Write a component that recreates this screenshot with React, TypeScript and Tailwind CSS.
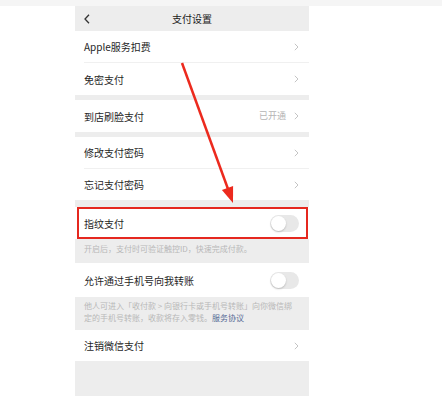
import React from "react";

const font = { fontFamily: '"Noto Sans CJK SC", "Noto Sans", sans-serif' };

const Chevron = () => (
  <svg width="5" height="8" viewBox="0 0 5 8" className="shrink-0">
    <polyline points="0.8,0.8 4,4 0.8,7.2" fill="none" stroke="#c4c4c4" strokeWidth="1" />
  </svg>
);

const Toggle = () => (
  <div className="w-[29px] h-[17px] rounded-full bg-[#e8e8e8] p-[1px] flex items-center">
    <div className="w-[15px] h-[15px] rounded-full bg-white shadow-[0_1px_2px_rgba(0,0,0,0.2)]" />
  </div>
);

const Row = ({
  label,
  value,
  toggle,
  divider,
  h = "h-[31px]",
}: {
  label: string;
  value?: string;
  toggle?: boolean;
  divider?: boolean;
  h?: string;
}) => (
  <div className="bg-white">
    <div className={`${h} flex items-center pl-[9px] pr-[10px]`}>
      <span className="text-[10px] text-[#1f1f1f] flex-1">{label}</span>
      {value && <span className="text-[9px] text-[#b5b5b5] mr-[8px]">{value}</span>}
      {toggle ? <Toggle /> : <Chevron />}
    </div>
    {divider && <div className="ml-[9px] h-px bg-[#f0f0f0]" />}
  </div>
);

export default function App() {
  return (
    <div className="relative w-[442px] h-[396px] bg-white overflow-hidden" style={font}>
      <div className="h-[6px] bg-[#f5f5f5]" />
      <div className="ml-[75px] w-[234px] h-[390px] bg-[#ededed] flex flex-col">
        <div className="h-[25px] flex items-center px-[9px] relative">
          <svg width="6" height="10" viewBox="0 0 6 10">
            <polyline points="5,0.8 1,5 5,9.2" fill="none" stroke="#333" strokeWidth="1.3" />
          </svg>
          <span className="absolute left-0 right-0 text-center text-[10px] text-[#1a1a1a]">
            支付设置
          </span>
        </div>
        <Row label="Apple服务扣费" divider />
        <Row label="免密支付" h="h-[32px]" />
        <div className="h-[5px]" />
        <Row label="到店刷脸支付" value="已开通" h="h-[32px]" />
        <div className="h-[5px]" />
        <Row label="修改支付密码" divider />
        <Row label="忘记支付密码" />
        <div className="h-[7px]" />
        <Row label="指纹支付" toggle h="h-[32px]" />
        <div className="h-[24px] pl-[9px] pt-[4px] text-[8px] text-[#b8b8b8] leading-[12px]">
          开启后，支付时可验证触控ID，快速完成付款。
        </div>
        <Row label="允许通过手机号向我转账" toggle h="h-[34px]" />
        <div className="h-[33px] pl-[9px] pr-[10px] pt-[3px] text-[8px] text-[#b8b8b8] leading-[12px]">
          <div className="whitespace-nowrap">他人可进入「收付款 &gt; 向银行卡或手机号转账」向你微信绑</div>
          <div className="flex">
            <span>定的手机号转账，收款将存入零钱。</span>
            <span className="text-[#576b95]">服务协议</span>
          </div>
        </div>
        <Row label="注销微信支付" />
      </div>

      <div className="absolute left-[77px] top-[207px] w-[231px] h-[32px] border-2 border-[#e5281f]" />
      <svg className="absolute left-0 top-0" width="442" height="396" viewBox="0 0 442 396">
        <line x1="182" y1="63" x2="228" y2="189" stroke="#ec2a1e" strokeWidth="2.5" />
        <polygon points="233,203 221.9,190.1 233.1,186" fill="#ec2a1e" />
      </svg>
    </div>
  );
}
